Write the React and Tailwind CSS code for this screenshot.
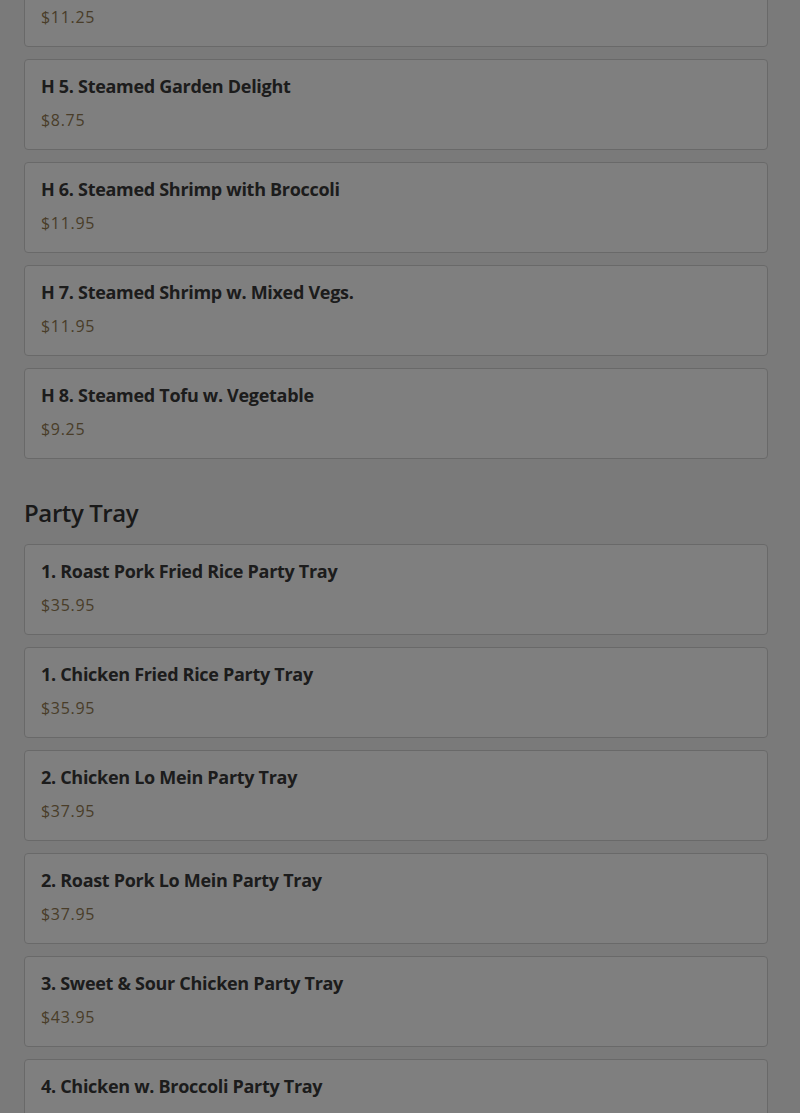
const STEAMED = [
  { name: 'H 4. Steamed Chicken w. Mixed Vegs.', price: '$11.25' },
  { name: 'H 5. Steamed Garden Delight', price: '$8.75' },
  { name: 'H 6. Steamed Shrimp with Broccoli', price: '$11.95' },
  { name: 'H 7. Steamed Shrimp w. Mixed Vegs.', price: '$11.95' },
  { name: 'H 8. Steamed Tofu w. Vegetable', price: '$9.25' },
];

const PARTY_TRAY = [
  { name: '1. Roast Pork Fried Rice Party Tray', price: '$35.95' },
  { name: '1. Chicken Fried Rice Party Tray', price: '$35.95' },
  { name: '2. Chicken Lo Mein Party Tray', price: '$37.95' },
  { name: '2. Roast Pork Lo Mein Party Tray', price: '$37.95' },
  { name: '3. Sweet & Sour Chicken Party Tray', price: '$43.95' },
  { name: '4. Chicken w. Broccoli Party Tray', price: '$43.95' },
];

function MenuItem({ item }) {
  return (
    <div className="rounded border border-[#d2d2d2] bg-white px-4 pt-3 pb-[17px]">
      <div className="text-[18px] leading-7 font-bold tracking-[-0.3px] text-[#383838]">{item.name}</div>
      <div className="mt-2 text-[16px] leading-6 tracking-[0.7px] text-[#927b52]">{item.price}</div>
    </div>
  );
}

export default function App() {
  return (
    <div className="relative min-h-screen overflow-hidden bg-[#f4f4f4] font-['Open_Sans','Noto_Sans',sans-serif]">
      <div className="pl-6 pr-8">
        {/* Steamed dishes (scrolled, first card partly hidden) */}
        <div className="-mt-[44px] flex flex-col gap-3">
          {STEAMED.map((item, i) => (
            <MenuItem key={i} item={item} />
          ))}
        </div>

        {/* Party Tray */}
        <h2 className="mt-[38px] mb-[15px] text-[24px] leading-8 font-semibold tracking-[-0.4px] text-[#333]">Party Tray</h2>
        <div className="flex flex-col gap-3 pb-10">
          {PARTY_TRAY.map((item, i) => (
            <MenuItem key={i} item={item} />
          ))}
        </div>
      </div>

      {/* modal backdrop */}
      <div className="fixed inset-0 bg-black/50" />
    </div>
  );
}
